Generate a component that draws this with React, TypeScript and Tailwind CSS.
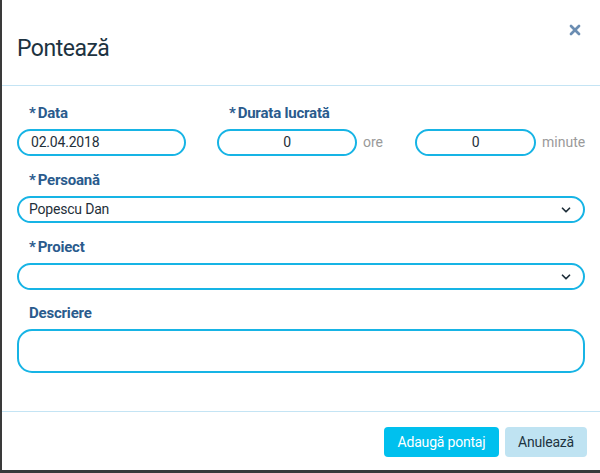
import { ChevronDown, X } from 'lucide-react';

const font = { fontFamily: '"Liberation Sans Narrow", "Roboto", sans-serif' };

function Label({ text, required }: { text: string; required?: boolean }) {
  return (
    <div className="h-[20px] pl-[12px] flex items-center text-[15px] font-bold text-[#2a5b8d] leading-none tracking-[-0.2px]">
      {required && <span className="mr-[2px]">*</span>}
      {text}
    </div>
  );
}

function Field({ value, center, className }: { value: string; center?: boolean; className?: string }) {
  return (
    <div
      className={`shrink-0 h-[27px] rounded-full border-2 border-[#17b4e5] flex items-center text-[14px] text-[#1f2f3a] tracking-[-0.2px] ${
        center ? 'justify-center' : 'px-[12px]'
      } ${className ?? ''}`}
    >
      {value}
    </div>
  );
}

function Select({ value }: { value: string }) {
  return (
    <div className="h-[27px] rounded-full border-2 border-[#17b4e5] flex items-center justify-between pl-[10px] pr-[10px] text-[14px] text-[#1f2f3a] tracking-[-0.2px]">
      <span>{value}</span>
      <ChevronDown size={14} strokeWidth={3} className="text-[#1f2f3a]" />
    </div>
  );
}

export default function App() {
  return (
    <div className="w-[600px] h-[473px] bg-[#3a3a3a] flex" style={font}>
      <div className="ml-[2px] w-[598px] h-[470px] bg-white flex flex-col">
        {/* Header */}
        <div className="h-[86px] shrink-0 border-b border-[#c4e4f4] flex items-start justify-between pl-[15px] pr-[17px]">
          <h2 className="mt-[37px] text-[23px] leading-none text-[#1d3341] tracking-[-0.5px]">Pontează</h2>
          <X size={16} strokeWidth={4} className="mt-[22px] text-[#6b8db2]" />
        </div>

        {/* Body */}
        <div className="flex-1 px-[15px] pt-[17px] flex flex-col">
          <div className="flex items-start">
            <div className="w-[169px] shrink-0 flex flex-col gap-[6px]">
              <Label text="Data" required />
              <Field value="02.04.2018" />
            </div>
            <div className="ml-[31px] shrink-0 flex flex-col gap-[6px]">
              <Label text="Durata lucrată" required />
              <div className="flex items-center">
                <Field value="0" center className="w-[140px]" />
                <span className="ml-[6px] w-[52px] shrink-0 text-[14px] text-[#9a9a9a]">ore</span>
                <Field value="0" center className="w-[121px]" />
                <span className="ml-[6px] shrink-0 text-[14px] text-[#9a9a9a]">minute</span>
              </div>
            </div>
          </div>

          <div className="mt-[14px] flex flex-col gap-[6px]">
            <Label text="Persoană" required />
            <Select value="Popescu Dan" />
          </div>

          <div className="mt-[14px] flex flex-col gap-[6px]">
            <Label text="Proiect" required />
            <Select value="" />
          </div>

          <div className="mt-[13px] flex flex-col gap-[6px]">
            <Label text="Descriere" />
            <div className="h-[44px] rounded-[15px] border-2 border-[#17b4e5]" />
          </div>
        </div>

        {/* Footer */}
        <div className="h-[59px] shrink-0 border-t border-[#c4e4f4] flex items-start justify-end gap-[6px] pr-[13px] pt-[15px]">
          <button className="w-[115px] h-[30px] rounded-[4px] bg-[#00c0ee] text-white text-[14px] tracking-[-0.2px]">
            Adaugă pontaj
          </button>
          <button className="w-[82px] h-[30px] rounded-[4px] bg-[#bfe3f2] text-[#1d3341] text-[14px] tracking-[-0.2px]">
            Anulează
          </button>
        </div>
      </div>
    </div>
  );
}
